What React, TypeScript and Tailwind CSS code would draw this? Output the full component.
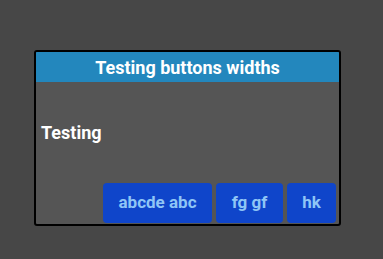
export default function App() {
  return (
    <div
      className="w-[383px] h-[259px] bg-[#474747] pt-[50px] pl-[34px]"
      style={{ fontFamily: "Roboto, 'Liberation Sans', sans-serif" }}
    >
      <div className="w-[307px] h-[176px] border-2 border-black rounded-[3px] bg-[#555555] flex flex-col overflow-hidden">
        <div className="h-[30px] bg-[#2387bd] flex items-center justify-center text-white font-bold text-[18px]">
          Testing buttons widths
        </div>
        <div className="flex-1 flex items-center pl-[5px] text-white font-bold text-[18px]">
          Testing
        </div>
        <div className="flex justify-end gap-[4px] pr-[3px] pb-[1px]">
          <button className="w-[109px] h-[40px] rounded-[4px] bg-[#0f45ca] text-[#8fc6f6] font-bold text-[17px]">
            abcde abc
          </button>
          <button className="w-[67px] h-[40px] rounded-[4px] bg-[#0f45ca] text-[#8fc6f6] font-bold text-[17px]">
            fg gf
          </button>
          <button className="w-[49px] h-[40px] rounded-[4px] bg-[#0f45ca] text-[#8fc6f6] font-bold text-[17px]">
            hk
          </button>
        </div>
      </div>
    </div>
  );
}
